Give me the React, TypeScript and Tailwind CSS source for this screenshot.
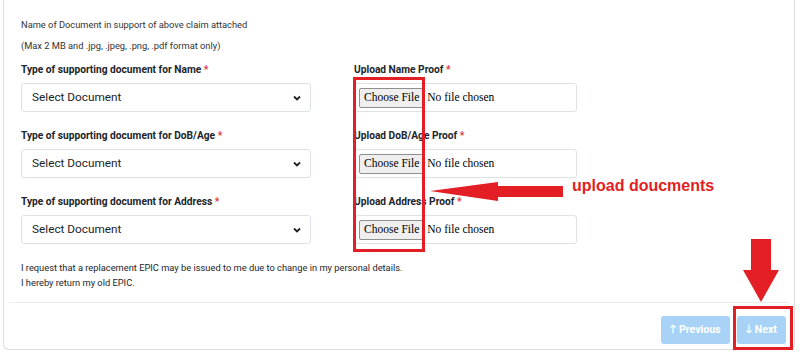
import React from 'react';

const rows = [
  { select: 'Type of supporting document for Name', upload: 'Upload Name Proof' },
  { select: 'Type of supporting document for DoB/Age', upload: 'Upload DoB/Age Proof' },
  { select: 'Type of supporting document for Address', upload: 'Upload Address Proof' },
];

const Label = ({ text }: { text: string }) => (
  <label className="block h-[14px] mb-[6px] text-[10.2px] leading-[14px] font-bold text-[#212529]">
    {text} <span className="text-[#dc3545]">*</span>
  </label>
);

const SelectBox = () => (
  <div className="flex items-center justify-between h-[29px] w-[290px] pl-[10px] pr-[9px] border border-[#dee2e6] rounded-[3px] bg-white">
    <span className="text-[11.8px] text-[#212529]">Select Document</span>
    <svg width="8" height="6" viewBox="0 0 8 6">
      <path d="M1 1.5 L4 4.5 L7 1.5" fill="none" stroke="#222" strokeWidth="1.8" />
    </svg>
  </div>
);

const FileBox = () => (
  <div className="flex items-center h-[29px] w-[222px] pl-[3px] border border-[#dee2e6] rounded-[3px] bg-white font-['Liberation_Serif',serif]">
    <span className="flex items-center h-[20px] px-[4px] border border-[#8f8f8f] rounded-[2px] bg-[#efefef] text-[11.5px] text-black">
      Choose File
    </span>
    <span className="ml-[3px] text-[11.5px] text-black">No file chosen</span>
  </div>
);

export default function App() {
  return (
    <div className="relative w-[800px] h-[355px] bg-white font-['Roboto',sans-serif] overflow-hidden">
      <div className="ml-[3px] w-[792px] h-[350px] border border-t-0 border-[#dcdcdc] rounded-b-[6px] flex flex-col">
        <div className="pl-[17px] pt-[18px]">
          <p className="text-[9.3px] leading-[14px] text-[#333]">Name of Document in support of above claim attached</p>
          <p className="mt-[7px] text-[9.3px] leading-[14px] text-[#333]">(Max 2 MB and .jpg, .jpeg, .png, .pdf format only)</p>
          <div className="mt-[10px] flex flex-col gap-[17px]">
            {rows.map((r) => (
              <div key={r.select} className="flex gap-[43px]">
                <div className="w-[290px]">
                  <Label text={r.select} />
                  <SelectBox />
                </div>
                <div className="w-[224px]">
                  <Label text={r.upload} />
                  <div className="pl-[1px]">
                    <FileBox />
                  </div>
                </div>
              </div>
            ))}
          </div>
          <p className="mt-[17px] text-[9.3px] leading-[14px] text-[#212529]">
            I request that a replacement EPIC may be issued to me due to change in my personal details.
          </p>
          <p className="text-[9.3px] leading-[15px] text-[#212529]">I hereby return my old EPIC.</p>
        </div>
        <div className="mt-auto mx-[5px] border-t border-[#ececec] flex justify-end gap-[7px] pt-[13px] pb-[5px] pr-[3px]">
          <button className="h-[28px] w-[69px] rounded-[3px] bg-[#a8d3f6] text-white text-[10.5px] font-bold">🡑 Previous</button>
          <button className="h-[28px] w-[49px] rounded-[3px] bg-[#a8d3f6] text-white text-[10.5px] font-bold">🡓 Next</button>
        </div>
      </div>

      {/* annotations */}
      <svg className="absolute inset-0 pointer-events-none" width="800" height="355" viewBox="0 0 800 355">
        <polygon points="430,191 498,182 498,186 563,186 563,197 498,197 498,201" fill="#e31e24" />
        <polygon points="751,239 771,239 771,270 779,270 761,302 743,270 751,270" fill="#e31e24" />
      </svg>
      <div className="absolute left-[353px] top-[77px] w-[72px] h-[175px] border-[3px] border-[#e31e24]" />
      <div className="absolute left-[733px] top-[306px] w-[60px] h-[44px] border-[3px] border-[#e31e24]" />
      <div className="absolute left-[572px] top-[176px] text-[16px] font-bold text-[#e31e24] font-['Liberation_Sans',sans-serif] leading-[20px]">
        upload doucments
      </div>
    </div>
  );
}
